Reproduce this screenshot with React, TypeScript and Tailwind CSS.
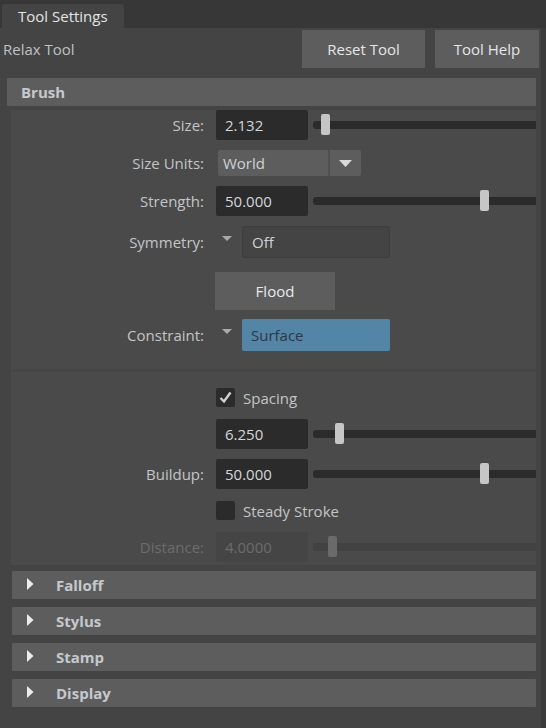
import React from 'react';

const LABEL_W = 'w-[194px]';

function Label({ text, disabled }: { text: string; disabled?: boolean }) {
  return (
    <div
      className={`${LABEL_W} shrink-0 text-right pr-[1px] ${disabled ? 'text-[#6c6c6c]' : 'text-[#c3c5c7]'}`}
    >
      {text}
    </div>
  );
}

function Slider({ pos, disabled }: { pos: number; disabled?: boolean }) {
  return (
    <div className="relative flex-1 h-[30px] ml-[5px] flex items-center">
      <div className={`w-full h-[8px] rounded-l-[3px] ${disabled ? 'bg-[#424242]' : 'bg-[#2b2b2b]'}`} />
      <div
        className={`absolute top-[4px] w-[9px] h-[21px] rounded-[2px] ${disabled ? 'bg-[#6a6a6a]' : 'bg-[#c6c6c6]'}`}
        style={{ left: pos }}
      />
    </div>
  );
}

function FloatField({ value, disabled }: { value: string; disabled?: boolean }) {
  return (
    <div
      className={`w-[92px] h-[30px] shrink-0 rounded-[2px] flex items-center pl-[9px] ${
        disabled ? 'bg-[#454545] text-[#6c6c6c]' : 'bg-[#2b2b2b] text-[#d3d6d9]'
      }`}
    >
      {value}
    </div>
  );
}

function SliderRow({ label, value, pos, disabled }: { label: string; value: string; pos: number; disabled?: boolean }) {
  return (
    <div className="flex items-center h-[30px]">
      <Label text={label} disabled={disabled} />
      <div className="ml-[11px] flex items-center flex-1">
        <FloatField value={value} disabled={disabled} />
        <Slider pos={pos} disabled={disabled} />
      </div>
    </div>
  );
}

function Checkbox({ label, checked }: { label: string; checked?: boolean }) {
  return (
    <div className="flex items-center h-[19px]">
      <div className={LABEL_W} />
      <div className="ml-[11px] flex items-center">
        <div className="w-[19px] h-[19px] rounded-[2px] bg-[#2b2b2b] flex items-center justify-center">
          {checked && (
            <svg width="15" height="15" viewBox="0 0 15 15">
              <path d="M2.5 8 L6 11.5 L12.5 2.5" fill="none" stroke="#d2d2d2" strokeWidth="2.4" />
            </svg>
          )}
        </div>
        <span className="ml-[8px] text-[#c3c5c7]">{label}</span>
      </div>
    </div>
  );
}

function OptionRow({ label, value, active }: { label: string; value: string; active?: boolean }) {
  return (
    <div className="flex items-center h-[32px]">
      <Label text={label} />
      <div className="ml-[17px] flex items-center">
        <svg width="10" height="6" viewBox="0 0 10 6" className="mb-[7px]">
          <path d="M0 0 L10 0 L5 5 Z" fill="#a9a9a9" />
        </svg>
        <div
          className={`ml-[10px] w-[148px] h-[32px] rounded-[2px] flex items-center pl-[9px] ${
            active ? 'bg-[#5285a6] text-[#2d3842]' : 'bg-[#444444] border border-[#3d3d3d] text-[#cfd2d5]'
          }`}
        >
          {value}
        </div>
      </div>
    </div>
  );
}

function SubHeader({ title }: { title: string }) {
  return (
    <div className="h-[28px] bg-[#5d5d5d] rounded-[1px] flex items-center">
      <svg width="7" height="12" viewBox="0 0 7 12" className="ml-[15px] mb-[3px]">
        <path d="M0 0 L6.5 6 L0 12 Z" fill="#ececec" />
      </svg>
      <span className="ml-[22px] font-bold text-[#c5c9cd]">{title}</span>
    </div>
  );
}

export default function App() {
  return (
    <div
      className="w-[546px] h-[728px] bg-[#373737] flex flex-col text-[15px] leading-[20px] overflow-hidden"
      style={{ fontFamily: '"Open Sans", "Noto Sans", sans-serif' }}
    >
      {/* tab strip */}
      <div className="h-[28px] shrink-0 flex items-end pl-[2px]">
        <div className="w-[122px] h-[24px] bg-[#444444] rounded-t-[3px] flex items-center pl-[16px] text-[#e2e4e6]">
          Tool Settings
        </div>
      </div>

      <div className="flex-1 flex">
        <div className="w-[541px] bg-[#444444] flex flex-col">
          {/* title + buttons */}
          <div className="h-[50px] flex items-start pt-[2px]">
            <div className="flex-1 pl-[3px] h-[38px] flex items-center text-[#bfc1c3]">Relax Tool</div>
            <button className="w-[123px] h-[38px] bg-[#5d5d5d] text-[#e4e6e8]">Reset Tool</button>
            <button className="ml-[10px] mr-[2px] w-[104px] h-[38px] bg-[#5d5d5d] text-[#e4e6e8]">Tool Help</button>
          </div>

          {/* brush header */}
          <div className="ml-[7px] mr-[5px] h-[28px] bg-[#5d5d5d] rounded-[1px] flex items-center pl-[14px] font-bold text-[#c5c9cd]">
            Brush
          </div>

          <div className="ml-[11px] mr-[5px] mt-[4px] flex flex-col bg-[#464646] gap-[3px]">
            {/* frame 1 */}
            <div className="bg-[#4a4a4a] flex flex-col pb-[18px]">
              <SliderRow label="Size:" value="2.132" pos={8} />

              <div className="mt-[10px] flex items-center h-[26px]">
                <Label text="Size Units:" />
                <div className="ml-[13px] flex h-[26px] w-[143px] bg-[#5d5d5d] rounded-[2px]">
                  <div className="w-[112px] flex items-center pl-[5px] text-[#cfd2d5] border-r-2 border-[#4f4f4f]">
                    World
                  </div>
                  <div className="flex-1 flex items-center justify-center">
                    <svg width="13" height="7" viewBox="0 0 13 7">
                      <path d="M0 0 L13 0 L6.5 7 Z" fill="#dadada" />
                    </svg>
                  </div>
                </div>
              </div>

              <div className="mt-[10px]">
                <SliderRow label="Strength:" value="50.000" pos={167} />
              </div>

              <div className="mt-[10px]">
                <OptionRow label="Symmetry:" value="Off" />
              </div>

              <div className="mt-[14px] flex items-center h-[38px]">
                <div className={LABEL_W} />
                <button className="ml-[10px] w-[120px] h-[38px] bg-[#5d5d5d] text-[#e8eaec]">Flood</button>
              </div>

              <div className="mt-[9px]">
                <OptionRow label="Constraint:" value="Surface" active />
              </div>
            </div>

            {/* frame 2 */}
            <div className="bg-[#4a4a4a] flex flex-col pt-[16px] pb-[3px]">
              <Checkbox label="Spacing" checked />
              <div className="mt-[12px]">
                <SliderRow label="" value="6.250" pos={22} />
              </div>
              <div className="mt-[10px]">
                <SliderRow label="Buildup:" value="50.000" pos={167} />
              </div>
              <div className="mt-[12px]">
                <Checkbox label="Steady Stroke" />
              </div>
              <div className="mt-[12px]">
                <SliderRow label="Distance:" value="4.0000" pos={15} disabled />
              </div>
            </div>
          </div>

          <div className="ml-[12px] mr-[5px] mt-[6px] flex flex-col gap-[8px]">
            <SubHeader title="Falloff" />
            <SubHeader title="Stylus" />
            <SubHeader title="Stamp" />
            <SubHeader title="Display" />
          </div>
        </div>
        <div className="flex-1 bg-[#3b3b3b]" />
      </div>
    </div>
  );
}
